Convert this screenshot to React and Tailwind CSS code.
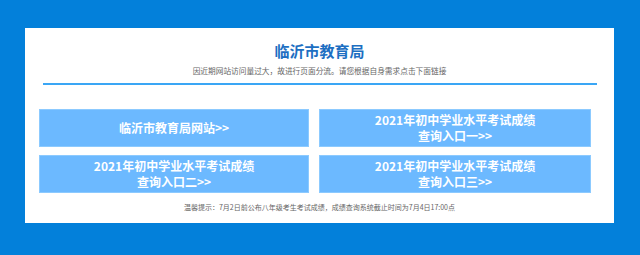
export default function App() {
  const font = { fontFamily: '"Noto Sans CJK SC", "Noto Sans", sans-serif' };
  const btn =
    "flex flex-col items-center justify-center bg-[#6cb9ff] border border-[#8ccaff] text-white font-bold text-[12px] leading-[16px] h-[38px]";
  return (
    <div className="w-[640px] h-[255px] bg-[#0380da] pt-[28px] pl-[25px]" style={font}>
      <div className="w-[589px] h-[195px] bg-white flex flex-col">
        <div className="pt-[13px] text-center text-[15px] leading-[20px] font-bold text-[#1d6fc2]">
          临沂市教育局
        </div>
        <div className="mt-[4px] text-center text-[7.7px] leading-[12px] text-[#666]">
          因近期网站访问量过大，故进行页面分流。请您根据自身需求点击下面链接
        </div>
        <div className="mt-[6px] ml-[18px] mr-[17px] h-[2px] bg-[#3aa6f5]" />
        <div className="mt-[24px] ml-[14px] grid grid-cols-[270px_272px] gap-x-[10px] gap-y-[8px]">
          <div className={btn}>
            <span>临沂市教育局网站&gt;&gt;</span>
          </div>
          <div className={btn}>
            <span>2021年初中学业水平考试成绩</span>
            <span>查询入口一&gt;&gt;</span>
          </div>
          <div className={btn}>
            <span>2021年初中学业水平考试成绩</span>
            <span>查询入口二&gt;&gt;</span>
          </div>
          <div className={btn}>
            <span>2021年初中学业水平考试成绩</span>
            <span>查询入口三&gt;&gt;</span>
          </div>
        </div>
        <div className="mt-[8px] text-center text-[7px] leading-[12px] text-[#666]">
          温馨提示：7月2日前公布八年级考生考试成绩，成绩查询系统截止时间为7月4日17:00点
        </div>
      </div>
    </div>
  );
}
